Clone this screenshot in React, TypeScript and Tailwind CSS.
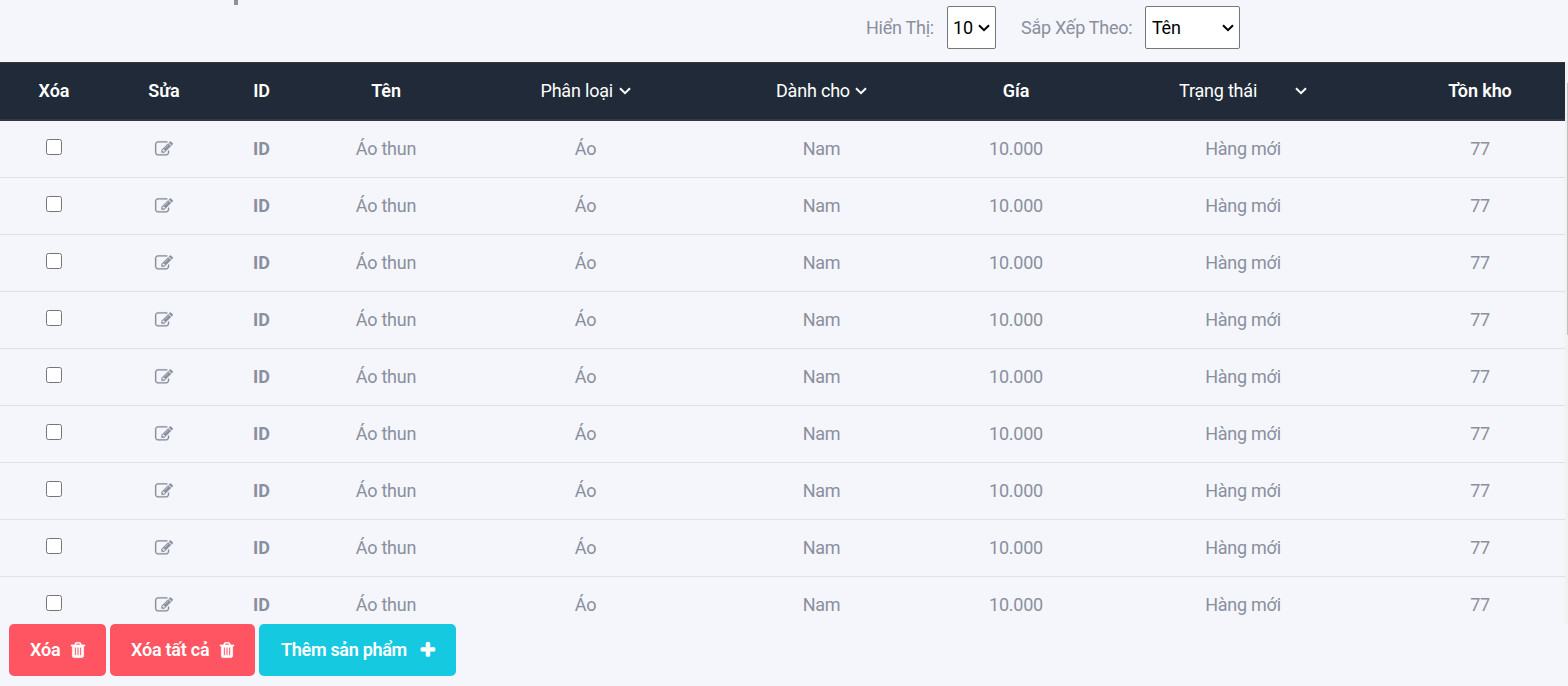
import React from "react";

const EDIT =
  "M888 1184l116-116-152-152-116 116v56h96v96h56zm440-720q-16-16-33 1l-350 350q-17 17-1 33t33-1l350-350q17-17 1-33zm80 594v190q0 119-84.5 203.5t-203.5 84.5h-832q-119 0-203.5-84.5t-84.5-203.5v-832q0-119 84.5-203.5t203.5-84.5h832q63 0 117 25 15 7 18 23 3 17-9 29l-49 49q-14 14-32 8-23-6-45-6h-832q-66 0-113 47t-47 113v832q0 66 47 113t113 47h832q66 0 113-47t47-113v-126q0-13 9-22l64-64q15-15 35-7t20 29zm-96-738l288 288-672 672h-288v-288zm444 132l-92 92-288-288 92-92q28-28 68-28t68 28l152 152q28 28 28 68t-28 68z";
const TRASH =
  "M704 1376v-704q0-14-9-23t-23-9h-64q-14 0-23 9t-9 23v704q0 14 9 23t23 9h64q14 0 23-9t9-23zm256 0v-704q0-14-9-23t-23-9h-64q-14 0-23 9t-9 23v704q0 14 9 23t23 9h64q14 0 23-9t9-23zm256 0v-704q0-14-9-23t-23-9h-64q-14 0-23 9t-9 23v704q0 14 9 23t23 9h64q14 0 23-9t9-23zm-544-992h448l-48-117q-7-9-17-11h-317q-10 2-17 11zm928 32v64q0 14-9 23t-23 9h-96v948q0 83-47 143.5t-113 60.5h-832q-66 0-113-58.5t-47-141.5v-952h-96q-14 0-23-9t-9-23v-64q0-14 9-23t23-9h309l70-167q15-37 54-63t79-26h320q40 0 79 26t54 63l70 167h309q14 0 23 9t9 23z";
const PLUS =
  "M1600 736v192q0 40-28 68t-68 28h-416v416q0 40-28 68t-68 28h-192q-40 0-68-28t-28-68v-416h-416q-40 0-68-28t-28-68v-192q0-40 28-68t68-28h416v-416q0-40 28-68t68-28h192q40 0 68 28t28 68v416h416q40 0 68 28t28 68z";

function Icon({ d, stroke, className = "" }: { d: string; stroke: number; className?: string }) {
  return (
    <svg
      viewBox="0 0 1792 1792"
      fill="currentColor"
      stroke="currentColor"
      strokeWidth={stroke}
      className={`size-[18px] shrink-0 overflow-visible ${className}`}
    >
      <path d={d} />
    </svg>
  );
}

function Chevron() {
  return (
    <svg viewBox="0 0 12 8" fill="none" stroke="currentColor" strokeWidth="2" className="h-2 w-3 shrink-0">
      <path d="M1 1.2 L6 6.2 L11 1.2" />
    </svg>
  );
}

function Picker({ label, className }: { label: string; className: string }) {
  return (
    <button className={`flex items-center justify-between ${className}`}>
      <span>{label}</span>
      <Chevron />
    </button>
  );
}

const COLUMNS =
  "grid grid-cols-[108px_112px_83px_166px_233px_239px_150px_304px_170px] items-center justify-items-center";

export default function App() {
  return (
    <div className="flex h-[686px] w-[1568px] flex-col overflow-hidden bg-[#f4f6fb] font-['Roboto',sans-serif] text-[18px] leading-[27px] tracking-[-0.25px] text-[#8a8f9e]">
      <div className="flex h-[62px] shrink-0 items-start">
        <div className="ml-[234px] h-[5px] w-[4px] bg-[#8e909d]" />
        <div className="ml-[628px] flex items-center pt-[6px]">
          <span className="w-[81px]">Hiển Thị:</span>
          <Picker label="10" className="h-[43px] w-[49px] rounded-[2px] border border-[#767676] bg-white pr-[5px] pl-[5px] tracking-normal text-black" />
          <span className="ml-[25px] w-[124px]">Sắp Xếp Theo:</span>
          <Picker label="Tên" className="h-[43px] w-[95px] rounded-[2px] border border-[#767676] bg-white pr-[5px] pl-[6px] text-black" />
        </div>
      </div>
      <div className="flex h-[562px] shrink-0">
        <div className="w-[1565px] overflow-hidden">
          <div className={`${COLUMNS} h-[59px] border-t border-b-2 border-[#32383e] bg-[#212a38] pb-px font-semibold tracking-[-0.1px] text-white`}>
            <span>Xóa</span>
            <span>Sửa</span>
            <span>ID</span>
            <span>Tên</span>
            <Picker label="Phân loại" className="w-[90px] font-normal tracking-[-0.2px]" />
            <Picker label="Dành cho" className="w-[91px] font-normal tracking-[-0.2px]" />
            <span>Gía</span>
            <Picker label="Trạng thái" className="w-[128px] font-normal tracking-[-0.2px]" />
            <span>Tồn kho</span>
          </div>
          {Array.from({ length: 9 }, (_, i) => (
            <div key={i} className={`${COLUMNS} h-[57px] border-b border-[#dee2e6] pb-[2px]`}>
              <input type="checkbox" className="mb-[2px] size-4" />
              <Icon d={EDIT} stroke={15} className="mt-px" />
              <span className="font-bold tracking-normal">ID</span>
              <span>Áo thun</span>
              <span>Áo</span>
              <span>Nam</span>
              <span>10.000</span>
              <span>Hàng mới</span>
              <span>77</span>
            </div>
          ))}
        </div>
        <div className="w-[3px] bg-[#f1f1f1] pt-[21px] pl-[2px]">
          <div className="h-[252px] bg-[#c1c1c1]" />
        </div>
      </div>
      <div className="flex h-[52px] gap-1 pl-[9px] font-semibold text-white">
        <button className="flex w-[97px] items-center rounded-[5px] bg-[#ff5562] pl-[21px]">
          <span className="w-[39px] pb-[2px] text-left">Xóa</span>
          <Icon d={TRASH} stroke={25} />
        </button>
        <button className="flex w-[145px] items-center rounded-[5px] bg-[#ff5562] pl-[21px]">
          <span className="w-[87px] pb-[2px] text-left">Xóa tất cả</span>
          <Icon d={TRASH} stroke={25} />
        </button>
        <button className="flex w-[197px] items-center rounded-[5px] bg-[#15c9e1] pl-[22px]">
          <span className="w-[138px] pb-[2px] text-left tracking-[-0.3px]">Thêm sản phẩm</span>
          <Icon d={PLUS} stroke={60} />
        </button>
      </div>
    </div>
  );
}
